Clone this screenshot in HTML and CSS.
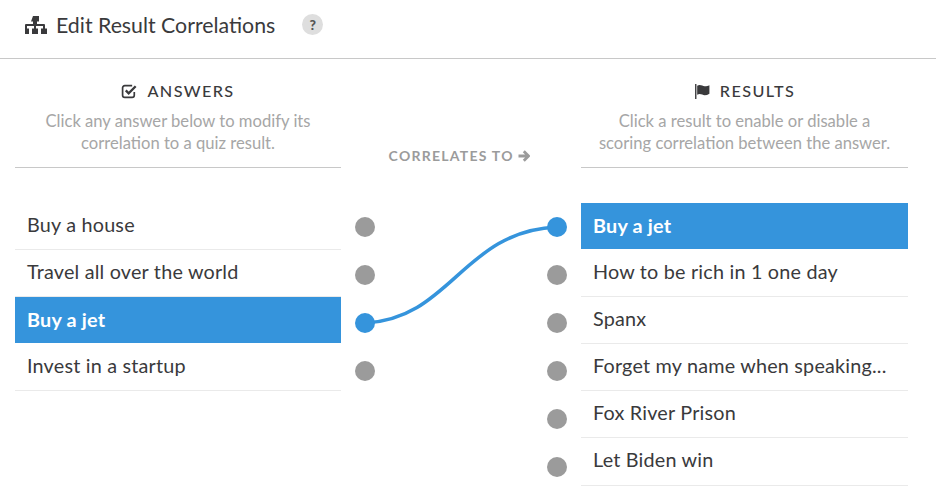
FILE: index.html
```
<!DOCTYPE html>
<html lang="en">
<head>
<meta charset="utf-8">
<title>Edit Result Correlations</title>
<link rel="stylesheet" href="styles.css">
</head>
<body>
<header class="top">
  <svg class="top-icon" viewBox="0 0 22 18" width="22" height="18" aria-hidden="true"><path d="M8 0h6v5.500h-2v2.500h7a1 1 0 0 1 1 1v3.500h2v5.500h-6v-5.500h2v-2.500h-7v2.500h2v5.500h-6v-5.500h2v-2.500h-7v2.500h2v5.500h-6v-5.500h2v-3.500a1 1 0 0 1 1-1h7v-2.500h-2z" fill="#3a3a3c"/></svg>
  <h1 class="title">Edit Result Correlations</h1>
  <span class="help">?</span>
</header>
<main class="board">
  <section class="col">
    <div class="col-head">
      <h2 class="col-title"><svg class="check" viewBox="0 0 16 14" width="17" height="15" aria-hidden="true"><path d="M12.500 7.500v3a2 2 0 0 1-2 2h-7a2 2 0 0 1-2-2v-7a2 2 0 0 1 2-2h7" fill="none" stroke="#3a3a3c" stroke-width="1.600"/><path d="M4.500 6l2.700 2.700 6.600-6.600" fill="none" stroke="#3a3a3c" stroke-width="2.200"/></svg>ANSWERS</h2>
      <p class="col-desc">Click any answer below to modify its correlation to a quiz result.</p>
    </div>
    <ul class="list">
      <li class="row">Buy a house</li>
      <li class="row">Travel all over the world</li>
      <li class="row active">Buy a jet</li>
      <li class="row">Invest in a startup</li>
    </ul>
  </section>
  <section class="mid">
    <div class="mid-head">CORRELATES TO <svg class="arrow" viewBox="0 0 12 12" width="12" height="12" aria-hidden="true"><path d="M.500 6h9.500M5.800 1.300L10.500 6 5.800 10.700" fill="none" stroke="#9b9b9b" stroke-width="2.800"/></svg></div>
    <div class="dots">
      <svg class="curve" viewBox="0 0 240 144" width="240" height="144" aria-hidden="true"><path d="M24 120C110 116 122 28 216 24" fill="none" stroke="#3594dc" stroke-width="3.500"/></svg>
      <div class="dot-col">
        <span class="dot"></span><span class="dot"></span><span class="dot on"></span><span class="dot"></span>
      </div>
      <div class="dot-col">
        <span class="dot on"></span><span class="dot"></span><span class="dot"></span><span class="dot"></span><span class="dot"></span><span class="dot"></span>
      </div>
    </div>
  </section>
  <section class="col">
    <div class="col-head">
      <h2 class="col-title"><svg class="flag" viewBox="0 0 16 14" width="17" height="15" aria-hidden="true"><path d="M1 0h1.300v14H1z" fill="#3a3a3c"/><path d="M3 1.500c3-1.500 5 .5 7 .5 2 0 3-.5 4.500-1v8c-1.500 1-3 1.500-4.500 1.500-2 0-4-2-7-.5z" fill="#3a3a3c"/></svg>RESULTS</h2>
      <p class="col-desc">Click a result to enable or disable a scoring correlation between the answer.</p>
    </div>
    <ul class="list">
      <li class="row active">Buy a jet</li>
      <li class="row">How to be rich in 1 one day</li>
      <li class="row">Spanx</li>
      <li class="row">Forget my name when speaking...</li>
      <li class="row">Fox River Prison</li>
      <li class="row">Let Biden win</li>
    </ul>
  </section>
</main>
</body>
</html>
```
FILE: styles.css
```
* { box-sizing: border-box; }
html, body { margin: 0; padding: 0; }
body {
  width: 936px;
  height: 503px;
  overflow: hidden;
  background: #fff;
  color: #3a3a3c;
  font-family: "Lato", "Liberation Sans", sans-serif;
}
.top {
  height: 59px;
  border-bottom: 1px solid #c8c8c8;
  display: flex;
  align-items: center;
  padding: 0 0 9px 25px;
}
.top-icon { flex: none; margin-top: 1px; }
.title {
  margin: 0 0 0 9px;
  font-size: 21.300px;
  font-weight: 400;
  line-height: 26px;
}
.help {
  margin-left: 27px;
  width: 21px;
  height: 21px;
  border-radius: 50%;
  background: #dedede;
  color: #555;
  font-size: 14px;
  font-weight: 900;
  display: flex;
  align-items: center;
  justify-content: center;
}
.board {
  display: grid;
  grid-template-columns: 326px 240px 327px;
  padding-left: 15px;
}
.col-head {
  height: 109px;
  border-bottom: 1px solid #c8c8c8;
  padding-top: 22px;
  text-align: center;
}
.col-title {
  margin: 0;
  font-size: 16.200px;
  font-weight: 500;
  letter-spacing: 1.400px;
  line-height: 20px;
  display: flex;
  align-items: center;
  justify-content: center;
  gap: 9px;
}
.col-desc {
  margin: 9px auto 0;
  width: 294px;
  font-size: 16.600px;
  line-height: 22px;
  color: #a6a6a6;
}
.list {
  list-style: none;
  margin: 35px 0 0;
  padding: 0;
}
.row {
  height: 47.100px;
  padding: 0 12px;
  font-size: 19.800px;
  letter-spacing: 0.200px;
  line-height: 43px;
  border-bottom: 1px solid #eaeaea;
}
.row.active {
  background: #3594dc;
  background-clip: padding-box;
  color: #fff;
  font-weight: 700;
  line-height: 44px;
  border-bottom-color: transparent;
}
.mid-head {
  height: 109px;
  padding-top: 88px;
  padding-right: 3px;
  text-align: center;
  font-size: 14px;
  font-weight: 700;
  letter-spacing: 1.250px;
  line-height: 18px;
  color: #9b9b9b;
}
.arrow { vertical-align: -1px; }
.dots {
  position: relative;
  display: flex;
  justify-content: space-between;
  padding: 49px 14px 0;
}
.curve {
  position: absolute;
  left: 0;
  top: 35px;
}
.dot-col {
  position: relative;
  display: flex;
  flex-direction: column;
  gap: 28.100px;
}
.dot {
  width: 20px;
  height: 20px;
  border-radius: 50%;
  background: #9b9b9b;
}
.dot.on { background: #3594dc; }
```
